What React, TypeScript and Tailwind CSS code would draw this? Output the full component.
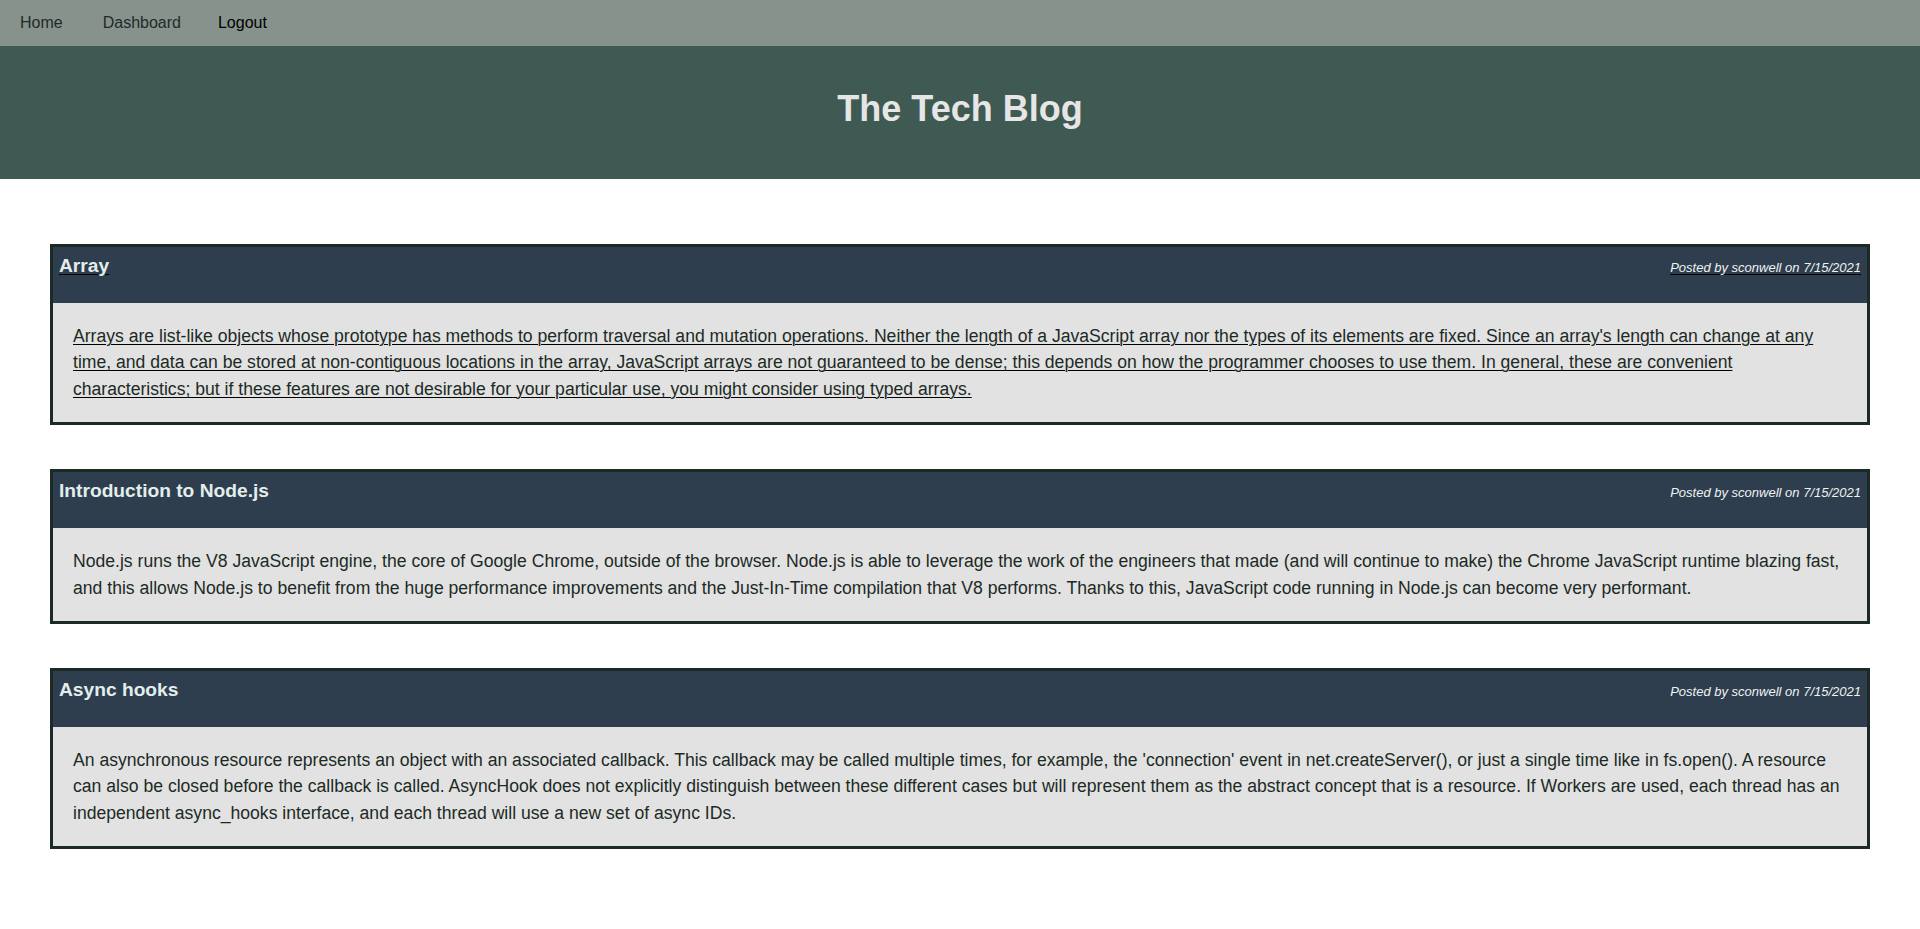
const posts = [
  {
    title: "Array",
    author: "sconwell",
    date: "7/15/2021",
    link: true,
    body: "Arrays are list-like objects whose prototype has methods to perform traversal and mutation operations. Neither the length of a JavaScript array nor the types of its elements are fixed. Since an array's length can change at any time, and data can be stored at non-contiguous locations in the array, JavaScript arrays are not guaranteed to be dense; this depends on how the programmer chooses to use them. In general, these are convenient characteristics; but if these features are not desirable for your particular use, you might consider using typed arrays.",
  },
  {
    title: "Introduction to Node.js",
    author: "sconwell",
    date: "7/15/2021",
    link: false,
    body: "Node.js runs the V8 JavaScript engine, the core of Google Chrome, outside of the browser. Node.js is able to leverage the work of the engineers that made (and will continue to make) the Chrome JavaScript runtime blazing fast, and this allows Node.js to benefit from the huge performance improvements and the Just-In-Time compilation that V8 performs. Thanks to this, JavaScript code running in Node.js can become very performant.",
  },
  {
    title: "Async hooks",
    author: "sconwell",
    date: "7/15/2021",
    link: false,
    body: "An asynchronous resource represents an object with an associated callback. This callback may be called multiple times, for example, the 'connection' event in net.createServer(), or just a single time like in fs.open(). A resource can also be closed before the callback is called. AsyncHook does not explicitly distinguish between these different cases but will represent them as the abstract concept that is a resource. If Workers are used, each thread has an independent async_hooks interface, and each thread will use a new set of async IDs.",
  },
];

type Post = (typeof posts)[number];

function PostCard({ post }: { post: Post }) {
  return (
    <article
      className={`border-[3px] border-[#1b2a25] ${post.link ? "underline decoration-1 underline-offset-2" : ""}`}
    >
      <header className="flex h-[56px] items-start justify-between bg-[#2e3e4e] px-[6px] pt-[7px] text-[#e3eeec]">
        <h2 className="text-[19.2px] font-bold leading-[24px]">{post.title}</h2>
        <p className="mt-[6px] text-[13px] italic leading-[16px] text-[#eef2f1]">
          Posted by {post.author} on {post.date}
        </p>
      </header>
      <div className="bg-[#e2e2e2] p-[20px] text-[17.6px] leading-[26.4px] text-[#1c2a25]">
        {post.body}
      </div>
    </article>
  );
}

export default function App() {
  return (
    <div className="min-h-screen bg-white font-['Liberation_Sans',Arial,sans-serif]">
      <nav className="flex h-[46px] items-center bg-[#87928d] text-[16px]">
        <a className="ml-[20px] text-[#222a27]">Home</a>
        <a className="ml-[40px] text-[#222a27]">Dashboard</a>
        <a className="ml-[37px] text-black">Logout</a>
      </nav>
      <header className="flex h-[133px] items-center justify-center bg-[#3e5a52] pb-[7px]">
        <h1 className="text-[36px] font-bold text-[#e6e6e6]">The Tech Blog</h1>
      </header>
      <main className="flex flex-col gap-[44px] px-[50px] pt-[65px] pb-[60px]">
        {posts.map((post) => (
          <PostCard key={post.title} post={post} />
        ))}
      </main>
    </div>
  );
}
